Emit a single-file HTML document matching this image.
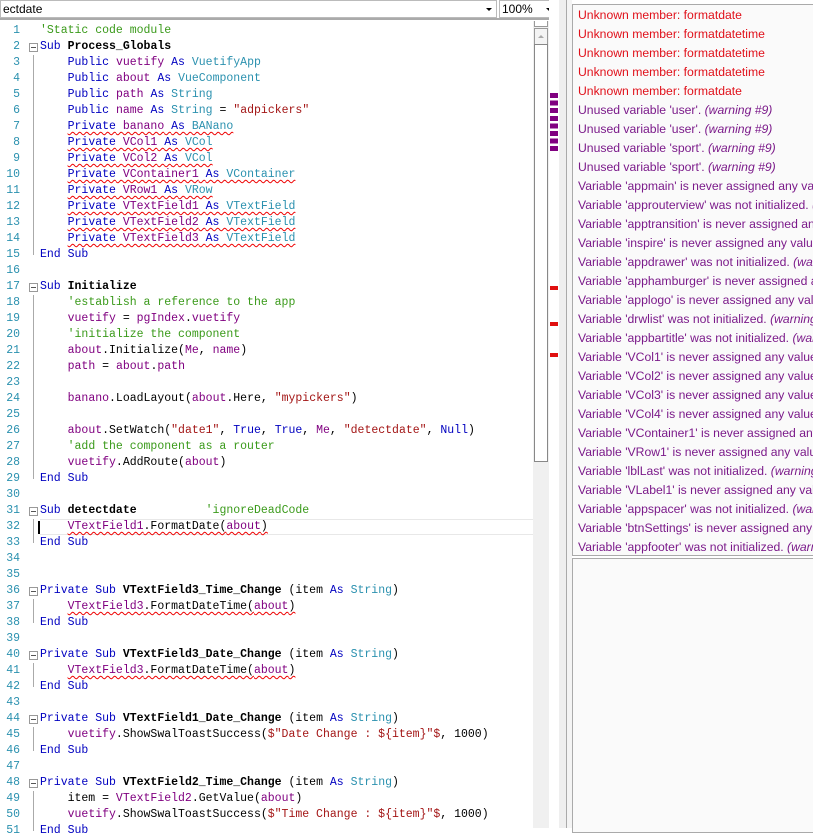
<!DOCTYPE html>
<html><head><meta charset="utf-8"><style>
*{margin:0;padding:0;box-sizing:border-box}
body{width:813px;height:828px;overflow:hidden;background:#fff;position:relative;font-family:"Liberation Sans",sans-serif}
.top{position:absolute;left:0;top:0;width:560px;height:20px;background:#fff;border-bottom:2px solid #aaa}
.combo{position:absolute;top:0;height:18px;border:1px solid #bbb;background:#fff;font-size:12px;line-height:16px;padding-left:2px;color:#000}
.arr{position:absolute;right:4px;top:7px;width:0;height:0;border-left:3px solid transparent;border-right:3px solid transparent;border-top:3px solid #000}
.code{position:absolute;left:0;top:23px;width:533px;font-family:"Liberation Mono",monospace;font-size:11.5px;color:#000}
.ln{position:absolute;height:16px;line-height:16px;white-space:pre;left:0;width:533px}
.num{position:absolute;left:0;width:20px;text-align:right;color:#2b91af}
.txt{position:absolute;left:40px}
.k{color:#0000c0}.v{color:#800080}.t{color:#2b91af}.s{color:#a31515}.c{color:#3a9a1a}.b{font-weight:bold}
.sq{text-decoration:underline wavy #e00;text-decoration-thickness:1px;text-underline-offset:2px}
.fold{position:absolute;left:29px;top:4px;width:9px;height:9px;border:1px solid #999;background:#fff}
.fold:after{content:"";position:absolute;left:1px;top:3px;width:5px;height:1px;background:#555}
.vl{position:absolute;left:33px;width:1px;background:#aaa}
.list{position:absolute;left:572px;top:4px;width:245px;height:552px;border:1px solid #aaa;background:#fafafa;overflow:hidden}
.it{height:19px;line-height:19px;font-size:12.2px;padding-left:5px;white-space:nowrap}
.r{color:#e0101a}.p{color:#7b1a8a}
i{font-style:italic}
</style></head><body>
<div class="top">
<div class="combo" style="left:0;width:497px">ectdate<div class="arr"></div></div>
<div class="combo" style="left:499px;width:58px">100%<div class="arr"></div></div>
</div>
<div style="position:absolute;left:533px;top:21px;width:16px;height:807px;background:#f0f0f0"></div>
<div style="position:absolute;left:534px;top:21px;width:14px;height:6px;border:1px solid #999;border-top:none;background:#fff"></div>
<div style="position:absolute;left:534px;top:28px;width:14px;height:17px;border:1px solid #999;background:#f4f4f4"><div style="position:absolute;left:3px;top:6px;border-left:3px solid transparent;border-right:3px solid transparent;border-bottom:3px solid #aaa"></div></div>
<div style="position:absolute;left:534px;top:44px;width:14px;height:418px;border:1px solid #888;background:#fff"></div>
<div style="position:absolute;left:549px;top:0;width:10px;height:828px;background:#fff"></div>
<div style="position:absolute;left:559px;top:0;width:8px;height:828px;background:#efefef"></div>
<div style="position:absolute;left:566px;top:0;width:1px;height:828px;background:#aaa"></div>
<div style="position:absolute;left:567px;top:0;width:5px;height:828px;background:#f4f4f4"></div>
<div style="position:absolute;left:550px;top:93px;width:8px;height:58px;background:repeating-linear-gradient(#800080 0 5px,#fff 5px 7.6px)"></div>
<div style="position:absolute;left:550px;top:286px;width:8px;height:4px;background:#e01010"></div>
<div style="position:absolute;left:550px;top:322px;width:8px;height:4px;background:#e01010"></div>
<div style="position:absolute;left:550px;top:353px;width:8px;height:4px;background:#e01010"></div>
<div class="code">
<div class="vl" style="top:32px;height:200px"></div>
<div class="vl" style="top:272px;height:184px"></div>
<div class="vl" style="top:496px;height:24px"></div>
<div class="vl" style="top:576px;height:24px"></div>
<div class="vl" style="top:640px;height:24px"></div>
<div class="vl" style="top:704px;height:24px"></div>
<div class="vl" style="top:768px;height:40px"></div>
<div style="position:absolute;left:40px;top:496px;width:493px;height:16px;border-top:1px solid #e8e8e8;border-bottom:1px solid #e8e8e8"></div>
<div style="position:absolute;left:38px;top:498px;width:2px;height:13px;background:#000"></div>
<div class="ln" style="top:0"><span class="num">1</span><span class="txt"><span class="c">'Static code module</span></span></div>
<div class="ln" style="top:16px"><span class="num">2</span><span class="fold"></span><span class="txt"><span class="k">Sub</span> <span class="b">Process_Globals</span></span></div>
<div class="ln" style="top:32px"><span class="num">3</span><span class="txt">    <span class="k">Public</span> <span class="v">vuetify</span> <span class="k">As</span> <span class="t">VuetifyApp</span></span></div>
<div class="ln" style="top:48px"><span class="num">4</span><span class="txt">    <span class="k">Public</span> <span class="v">about</span> <span class="k">As</span> <span class="t">VueComponent</span></span></div>
<div class="ln" style="top:64px"><span class="num">5</span><span class="txt">    <span class="k">Public</span> <span class="v">path</span> <span class="k">As</span> <span class="t">String</span></span></div>
<div class="ln" style="top:80px"><span class="num">6</span><span class="txt">    <span class="k">Public</span> <span class="v">name</span> <span class="k">As</span> <span class="t">String</span> = <span class="s">"adpickers"</span></span></div>
<div class="ln" style="top:96px"><span class="num">7</span><span class="txt">    <span class="sq"><span class="k">Private</span> <span class="v">banano</span> <span class="k">As</span> <span class="t">BANano</span></span></span></div>
<div class="ln" style="top:112px"><span class="num">8</span><span class="txt">    <span class="sq"><span class="k">Private</span> <span class="v">VCol1</span> <span class="k">As</span> <span class="t">VCol</span></span></span></div>
<div class="ln" style="top:128px"><span class="num">9</span><span class="txt">    <span class="sq"><span class="k">Private</span> <span class="v">VCol2</span> <span class="k">As</span> <span class="t">VCol</span></span></span></div>
<div class="ln" style="top:144px"><span class="num">10</span><span class="txt">    <span class="sq"><span class="k">Private</span> <span class="v">VContainer1</span> <span class="k">As</span> <span class="t">VContainer</span></span></span></div>
<div class="ln" style="top:160px"><span class="num">11</span><span class="txt">    <span class="sq"><span class="k">Private</span> <span class="v">VRow1</span> <span class="k">As</span> <span class="t">VRow</span></span></span></div>
<div class="ln" style="top:176px"><span class="num">12</span><span class="txt">    <span class="sq"><span class="k">Private</span> <span class="v">VTextField1</span> <span class="k">As</span> <span class="t">VTextField</span></span></span></div>
<div class="ln" style="top:192px"><span class="num">13</span><span class="txt">    <span class="sq"><span class="k">Private</span> <span class="v">VTextField2</span> <span class="k">As</span> <span class="t">VTextField</span></span></span></div>
<div class="ln" style="top:208px"><span class="num">14</span><span class="txt">    <span class="sq"><span class="k">Private</span> <span class="v">VTextField3</span> <span class="k">As</span> <span class="t">VTextField</span></span></span></div>
<div class="ln" style="top:224px"><span class="num">15</span><span class="txt"><span class="k">End Sub</span></span></div>
<div class="ln" style="top:240px"><span class="num">16</span></div>
<div class="ln" style="top:256px"><span class="num">17</span><span class="fold"></span><span class="txt"><span class="k">Sub</span> <span class="b">Initialize</span></span></div>
<div class="ln" style="top:272px"><span class="num">18</span><span class="txt">    <span class="c">'establish a reference to the app</span></span></div>
<div class="ln" style="top:288px"><span class="num">19</span><span class="txt">    <span class="v">vuetify</span> = <span class="v">pgIndex</span>.<span class="v">vuetify</span></span></div>
<div class="ln" style="top:304px"><span class="num">20</span><span class="txt">    <span class="c">'initialize the component</span></span></div>
<div class="ln" style="top:320px"><span class="num">21</span><span class="txt">    <span class="v">about</span>.Initialize(<span class="v">Me</span>, <span class="v">name</span>)</span></div>
<div class="ln" style="top:336px"><span class="num">22</span><span class="txt">    <span class="v">path</span> = <span class="v">about</span>.<span class="v">path</span></span></div>
<div class="ln" style="top:352px"><span class="num">23</span></div>
<div class="ln" style="top:368px"><span class="num">24</span><span class="txt">    <span class="v">banano</span>.LoadLayout(<span class="v">about</span>.Here, <span class="s">"mypickers"</span>)</span></div>
<div class="ln" style="top:384px"><span class="num">25</span></div>
<div class="ln" style="top:400px"><span class="num">26</span><span class="txt">    <span class="v">about</span>.SetWatch(<span class="s">"date1"</span>, <span class="k">True</span>, <span class="k">True</span>, <span class="v">Me</span>, <span class="s">"detectdate"</span>, <span class="k">Null</span>)</span></div>
<div class="ln" style="top:416px"><span class="num">27</span><span class="txt">    <span class="c">'add the component as a router</span></span></div>
<div class="ln" style="top:432px"><span class="num">28</span><span class="txt">    <span class="v">vuetify</span>.AddRoute(<span class="v">about</span>)</span></div>
<div class="ln" style="top:448px"><span class="num">29</span><span class="txt"><span class="k">End Sub</span></span></div>
<div class="ln" style="top:464px"><span class="num">30</span></div>
<div class="ln" style="top:480px"><span class="num">31</span><span class="fold"></span><span class="txt"><span class="k">Sub</span> <span class="b">detectdate</span>          <span class="c">'ignoreDeadCode</span></span></div>
<div class="ln" style="top:496px"><span class="num">32</span><span class="txt">    <span class="sq"><span class="v">VTextField1</span>.FormatDate(<span class="v">about</span>)</span></span></div>
<div class="ln" style="top:512px"><span class="num">33</span><span class="txt"><span class="k">End Sub</span></span></div>
<div class="ln" style="top:528px"><span class="num">34</span></div>
<div class="ln" style="top:544px"><span class="num">35</span></div>
<div class="ln" style="top:560px"><span class="num">36</span><span class="fold"></span><span class="txt"><span class="k">Private Sub</span> <span class="b">VTextField3_Time_Change</span> (item <span class="k">As</span> <span class="t">String</span>)</span></div>
<div class="ln" style="top:576px"><span class="num">37</span><span class="txt">    <span class="sq"><span class="v">VTextField3</span>.FormatDateTime(<span class="v">about</span>)</span></span></div>
<div class="ln" style="top:592px"><span class="num">38</span><span class="txt"><span class="k">End Sub</span></span></div>
<div class="ln" style="top:608px"><span class="num">39</span></div>
<div class="ln" style="top:624px"><span class="num">40</span><span class="fold"></span><span class="txt"><span class="k">Private Sub</span> <span class="b">VTextField3_Date_Change</span> (item <span class="k">As</span> <span class="t">String</span>)</span></div>
<div class="ln" style="top:640px"><span class="num">41</span><span class="txt">    <span class="sq"><span class="v">VTextField3</span>.FormatDateTime(<span class="v">about</span>)</span></span></div>
<div class="ln" style="top:656px"><span class="num">42</span><span class="txt"><span class="k">End Sub</span></span></div>
<div class="ln" style="top:672px"><span class="num">43</span></div>
<div class="ln" style="top:688px"><span class="num">44</span><span class="fold"></span><span class="txt"><span class="k">Private Sub</span> <span class="b">VTextField1_Date_Change</span> (item <span class="k">As</span> <span class="t">String</span>)</span></div>
<div class="ln" style="top:704px"><span class="num">45</span><span class="txt">    <span class="v">vuetify</span>.ShowSwalToastSuccess(<span class="s">$"Date Change : ${item}"$</span>, 1000)</span></div>
<div class="ln" style="top:720px"><span class="num">46</span><span class="txt"><span class="k">End Sub</span></span></div>
<div class="ln" style="top:736px"><span class="num">47</span></div>
<div class="ln" style="top:752px"><span class="num">48</span><span class="fold"></span><span class="txt"><span class="k">Private Sub</span> <span class="b">VTextField2_Time_Change</span> (item <span class="k">As</span> <span class="t">String</span>)</span></div>
<div class="ln" style="top:768px"><span class="num">49</span><span class="txt">    item = <span class="v">VTextField2</span>.GetValue(<span class="v">about</span>)</span></div>
<div class="ln" style="top:784px"><span class="num">50</span><span class="txt">    <span class="v">vuetify</span>.ShowSwalToastSuccess(<span class="s">$"Time Change : ${item}"$</span>, 1000)</span></div>
<div class="ln" style="top:800px"><span class="num">51</span><span class="txt"><span class="k">End Sub</span></span></div>
</div>
<div class="list">
<div style="height:1px"></div>
<div class="it r">Unknown member: formatdate</div>
<div class="it r">Unknown member: formatdatetime</div>
<div class="it r">Unknown member: formatdatetime</div>
<div class="it r">Unknown member: formatdatetime</div>
<div class="it r">Unknown member: formatdate</div>
<div class="it p">Unused variable 'user'. <i>(warning #9)</i></div>
<div class="it p">Unused variable 'user'. <i>(warning #9)</i></div>
<div class="it p">Unused variable 'sport'. <i>(warning #9)</i></div>
<div class="it p">Unused variable 'sport'. <i>(warning #9)</i></div>
<div class="it p">Variable 'appmain' is never assigned any value. <i>(warning #10)</i></div>
<div class="it p">Variable 'approuterview' was not initialized. <i>(warning #11)</i></div>
<div class="it p">Variable 'apptransition' is never assigned any value. <i>(warning #10)</i></div>
<div class="it p">Variable 'inspire' is never assigned any value. <i>(warning #10)</i></div>
<div class="it p">Variable 'appdrawer' was not initialized. <i>(warning #11)</i></div>
<div class="it p">Variable 'apphamburger' is never assigned any value. <i>(warning #10)</i></div>
<div class="it p">Variable 'applogo' is never assigned any value. <i>(warning #10)</i></div>
<div class="it p">Variable 'drwlist' was not initialized. <i>(warning #11)</i></div>
<div class="it p">Variable 'appbartitle' was not initialized. <i>(warning #11)</i></div>
<div class="it p">Variable 'VCol1' is never assigned any value. <i>(warning #10)</i></div>
<div class="it p">Variable 'VCol2' is never assigned any value. <i>(warning #10)</i></div>
<div class="it p">Variable 'VCol3' is never assigned any value. <i>(warning #10)</i></div>
<div class="it p">Variable 'VCol4' is never assigned any value. <i>(warning #10)</i></div>
<div class="it p">Variable 'VContainer1' is never assigned any value. <i>(warning #10)</i></div>
<div class="it p">Variable 'VRow1' is never assigned any value. <i>(warning #10)</i></div>
<div class="it p">Variable 'lblLast' was not initialized. <i>(warning #11)</i></div>
<div class="it p">Variable 'VLabel1' is never assigned any value. <i>(warning #10)</i></div>
<div class="it p">Variable 'appspacer' was not initialized. <i>(warning #11)</i></div>
<div class="it p">Variable 'btnSettings' is never assigned any value. <i>(warning #10)</i></div>
<div class="it p">Variable 'appfooter' was not initialized. <i>(warning #11)</i></div>
</div>
<div style="position:absolute;left:572px;top:558px;width:245px;height:275px;border:1px solid #aaa;background:#fafafa"></div>
</body></html>
